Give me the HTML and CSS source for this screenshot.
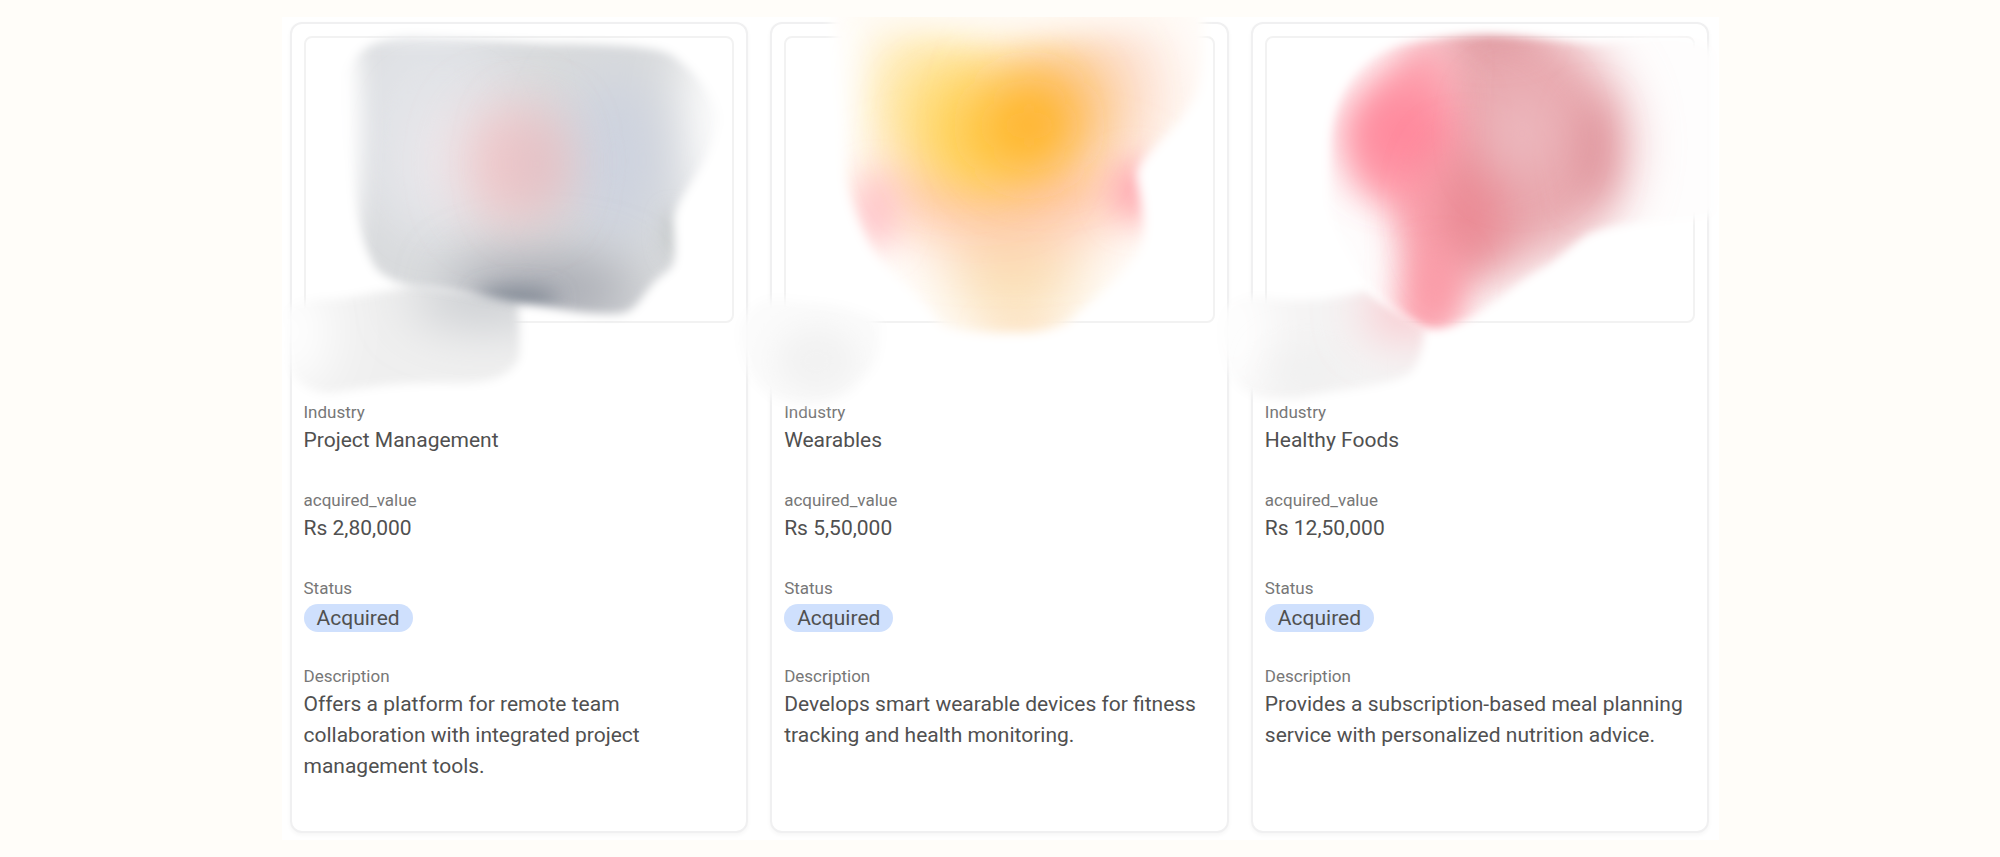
FILE: index.html
```html
<!DOCTYPE html>
<html lang="en">
<head>
<meta charset="utf-8">
<title>Acquired companies</title>
<link rel="stylesheet" href="styles.css">
</head>
<body>
<main class="panel">
  <article class="card">
    <div class="frame"></div>
    <dl class="fields">
      <div class="field"><dt>Industry</dt><dd>Project Management</dd></div>
      <div class="field"><dt>acquired_value</dt><dd>Rs 2,80,000</dd></div>
      <div class="field"><dt>Status</dt><dd class="status"><span class="chip">Acquired</span></dd></div>
      <div class="field"><dt>Description</dt><dd>Offers a platform for remote team collaboration with integrated project management tools.</dd></div>
    </dl>
    <svg class="art" viewBox="60 66 1371 1134" aria-hidden="true">
      <defs>
        <filter id="a-soft" x="-30%" y="-30%" width="160%" height="160%"><feGaussianBlur stdDeviation="15"/></filter>
        <filter id="a-wide" x="-200%" y="-200%" width="500%" height="500%"><feGaussianBlur stdDeviation="80"/></filter>
        <filter id="a-mid" x="-200%" y="-200%" width="500%" height="500%"><feGaussianBlur stdDeviation="32"/></filter>
        <mask id="a-body" maskUnits="userSpaceOnUse" x="0" y="0" width="1500" height="1250">
          <path filter="url(#a-soft)" fill="#fff" d="M220 220Q260 115 420 106C650 116 700 132 900 132C1050 136 1150 140 1200 164Q1310 240 1340 340C1340 480 1220 570 1208 650C1205 720 1225 780 1190 810C1110 860 1110 935 1040 938C930 945 830 912 750 910C640 895 560 865 430 860Q330 830 310 790C250 680 240 560 225 400Z"/>
        </mask>
        <mask id="a-foot" maskUnits="userSpaceOnUse" x="-50" y="700" width="1000" height="600">
          <path filter="url(#a-soft)" fill="#fff" d="M50 930Q80 890 200 895C300 880 380 860 450 855L740 900Q750 1000 745 1070Q710 1150 560 1145C400 1140 300 1155 180 1175Q80 1170 60 1090Z"/>
        </mask>
      </defs>
      <g mask="url(#a-foot)">
        <rect x="-50" y="700" width="1000" height="600" fill="#efefef"/>
        <ellipse cx="60" cy="990" rx="130" ry="190" fill="#fff" filter="url(#a-wide)"/>
        <ellipse cx="640" cy="890" rx="220" ry="80" fill="#c6c9cd" filter="url(#a-wide)"/>
      </g>
      <g mask="url(#a-body)">
        <rect width="1500" height="1250" fill="#d8dadc"/>
        <ellipse cx="480" cy="380" rx="260" ry="340" fill="#e1e3e7" filter="url(#a-wide)"/>
        <ellipse cx="215" cy="380" rx="60" ry="440" fill="#fff" filter="url(#a-mid)"/>
        <ellipse cx="400" cy="80" rx="260" ry="24" fill="#fff" filter="url(#a-mid)"/>
        <ellipse cx="1350" cy="370" rx="120" ry="320" fill="#fff" filter="url(#a-wide)"/>
        <ellipse cx="1030" cy="480" rx="150" ry="260" fill="#ced3df" filter="url(#a-wide)"/>
        <ellipse cx="520" cy="470" rx="100" ry="170" fill="#ece8ec" filter="url(#a-wide)"/>
        <ellipse cx="820" cy="870" rx="280" ry="110" fill="#a9abb3" filter="url(#a-wide)"/>
        <ellipse cx="710" cy="490" rx="130" ry="180" fill="#f2cacc" filter="url(#a-wide)"/>
        <ellipse cx="800" cy="490" rx="80" ry="150" fill="#e3bdc2" filter="url(#a-wide)"/>
        <ellipse cx="740" cy="895" rx="120" ry="32" fill="#7e8692" filter="url(#a-mid)"/>
        <ellipse cx="1205" cy="700" rx="20" ry="70" fill="#b9bebe" filter="url(#a-mid)"/>
      </g>
    </svg>
  </article>

  <article class="card">
    <div class="frame"></div>
    <dl class="fields">
      <div class="field"><dt>Industry</dt><dd>Wearables</dd></div>
      <div class="field"><dt>acquired_value</dt><dd>Rs 5,50,000</dd></div>
      <div class="field"><dt>Status</dt><dd class="status"><span class="chip">Acquired</span></dd></div>
      <div class="field"><dt>Description</dt><dd>Develops smart wearable devices for fitness tracking and health monitoring.</dd></div>
    </dl>
    <svg class="art" viewBox="90 66 1371 1134" aria-hidden="true">
      <defs>
        <filter id="b-soft" x="-30%" y="-30%" width="160%" height="160%"><feGaussianBlur stdDeviation="16"/></filter>
        <filter id="b-wide" x="-200%" y="-200%" width="500%" height="500%"><feGaussianBlur stdDeviation="90"/></filter>
        <filter id="b-mid" x="-200%" y="-200%" width="500%" height="500%"><feGaussianBlur stdDeviation="48"/></filter>
        <clipPath id="b-top"><rect x="-60" y="51" width="1600" height="1250"/></clipPath>
        <mask id="b-body" maskUnits="userSpaceOnUse" x="-50" y="0" width="1600" height="1250">
          <path filter="url(#b-soft)" fill="#fff" d="M260 -20L1370 -20Q1410 120 1370 280C1310 400 1200 450 1185 520C1195 600 1225 690 1195 750C1130 860 1040 900 985 965Q900 1000 820 994Q680 1002 600 975C540 880 440 820 390 740C340 640 310 560 310 480C300 300 290 240 285 140Z"/>
        </mask>
        <mask id="b-foot" maskUnits="userSpaceOnUse" x="-100" y="700" width="800" height="600">
          <path filter="url(#b-soft)" fill="#fff" d="M0 980Q40 870 170 900Q330 905 420 960Q430 1080 370 1130Q320 1200 220 1210Q130 1215 70 1170Q0 1100 0 980Z"/>
        </mask>
      </defs>
      <g mask="url(#b-foot)">
        <rect x="-100" y="700" width="800" height="600" fill="#fbfbfb"/>
        <ellipse cx="230" cy="1080" rx="130" ry="110" fill="#f2f2f2" filter="url(#b-mid)"/>
      </g>
      <g clip-path="url(#b-top)">
        <g mask="url(#b-body)">
          <rect x="-50" width="1600" height="1250" fill="#fffdfb"/>
          <ellipse cx="1110" cy="270" rx="180" ry="230" fill="#fde0d2" filter="url(#b-wide)"/>
          <ellipse cx="500" cy="280" rx="110" ry="220" fill="#feecc0" filter="url(#b-wide)"/>
          <ellipse cx="820" cy="780" rx="200" ry="230" fill="#fbe0b8" filter="url(#b-wide)"/>
          <ellipse cx="790" cy="580" rx="420" ry="130" fill="#ffc4ac" filter="url(#b-wide)"/>
          <ellipse cx="640" cy="310" rx="180" ry="190" fill="#ffe087" filter="url(#b-wide)"/>
          <ellipse cx="940" cy="310" rx="180" ry="180" fill="#fdc583" filter="url(#b-wide)"/>
          <ellipse cx="410" cy="630" rx="60" ry="110" fill="#ffc4ca" filter="url(#b-mid)"/>
          <ellipse cx="1180" cy="570" rx="70" ry="90" fill="#ffa8b0" filter="url(#b-mid)"/>
          <ellipse cx="720" cy="420" rx="180" ry="160" fill="#ffd055" filter="url(#b-wide)"/>
          <ellipse cx="865" cy="375" rx="135" ry="145" fill="#ffb020" filter="url(#b-wide)"/>
          <ellipse cx="280" cy="250" rx="40" ry="240" fill="#fff" filter="url(#b-mid)"/>
          <ellipse cx="830" cy="20" rx="560" ry="60" fill="#fffaf4" filter="url(#b-mid)"/>
          <ellipse cx="850" cy="1000" rx="110" ry="20" fill="#fcd4a8" filter="url(#b-mid)"/>
        </g>
      </g>
    </svg>
  </article>

  <article class="card">
    <div class="frame"></div>
    <dl class="fields">
      <div class="field"><dt>Industry</dt><dd>Healthy Foods</dd></div>
      <div class="field"><dt>acquired_value</dt><dd>Rs 12,50,000</dd></div>
      <div class="field"><dt>Status</dt><dd class="status"><span class="chip">Acquired</span></dd></div>
      <div class="field"><dt>Description</dt><dd>Provides a subscription-based meal planning service with personalized nutrition advice.</dd></div>
    </dl>
    <svg class="art" viewBox="90 66 1371 1134" aria-hidden="true">
      <defs>
        <filter id="c-soft" x="-30%" y="-30%" width="160%" height="160%"><feGaussianBlur stdDeviation="14"/></filter>
        <filter id="c-wide" x="-200%" y="-200%" width="500%" height="500%"><feGaussianBlur stdDeviation="75"/></filter>
        <filter id="c-mid" x="-200%" y="-200%" width="500%" height="500%"><feGaussianBlur stdDeviation="54"/></filter>
        <mask id="c-body" maskUnits="userSpaceOnUse" x="-50" y="0" width="1650" height="1250">
          <path filter="url(#c-soft)" fill="#fff" d="M325 420C335 270 420 160 540 130Q680 104 800 104C920 106 1020 126 1130 130C1300 104 1440 100 1475 160L1475 640C1400 670 1230 650 1100 700C1040 740 1020 770 960 805C860 860 800 940 720 965Q640 1000 590 970C520 930 450 880 420 830C370 740 310 650 320 560Z"/>
        </mask>
        <mask id="c-foot" maskUnits="userSpaceOnUse" x="-100" y="700" width="900" height="600">
          <path filter="url(#c-soft)" fill="#fff" d="M0 980Q10 870 140 890C250 910 350 890 430 870L610 985Q600 1090 560 1120C480 1160 370 1160 230 1190Q100 1200 50 1150Q0 1080 0 980Z"/>
        </mask>
      </defs>
      <g mask="url(#c-foot)">
        <rect x="-100" y="700" width="900" height="600" fill="#f4f3f3"/>
        <ellipse cx="40" cy="990" rx="110" ry="220" fill="#fff" filter="url(#c-wide)"/>
        <ellipse cx="260" cy="1110" rx="120" ry="70" fill="#f0f0f0" filter="url(#c-mid)"/>
        <ellipse cx="550" cy="930" rx="120" ry="80" fill="#fbc2c9" filter="url(#c-wide)"/>
      </g>
      <g mask="url(#c-body)">
        <rect x="-50" width="1650" height="1250" fill="#fefdfd"/>
        <path filter="url(#c-wide)" fill="#e8a8ae" d="M640 20L920 20Q1220 200 1220 430Q1220 600 1080 720L820 820L600 860Z"/>
        <ellipse cx="1110" cy="450" rx="50" ry="150" fill="#df949c" filter="url(#c-mid)"/>
        <ellipse cx="820" cy="100" rx="120" ry="36" fill="#db9199" filter="url(#c-mid)"/>
        <path filter="url(#c-mid)" fill="#fda5b1" d="M370 390Q450 220 600 110L690 150L680 500L740 700L700 880L660 1040L520 1010L550 760L500 620L400 560Z"/>
        <ellipse cx="550" cy="400" rx="160" ry="140" fill="#ff889c" filter="url(#c-wide)"/>
        <ellipse cx="740" cy="630" rx="100" ry="190" fill="#ea8792" filter="url(#c-wide)"/>
        <ellipse cx="650" cy="880" rx="60" ry="120" fill="#fa98a4" filter="url(#c-mid)"/>
        <ellipse cx="900" cy="400" rx="100" ry="130" fill="#edb9bf" filter="url(#c-wide)"/>
      </g>
    </svg>
  </article>
</main>
</body>
</html>
```
FILE: styles.css
```css
* {
  box-sizing: border-box;
}

body {
  margin: 0;
  padding: 17px 0;
  background: #fffdf9;
  color: #505050;
  font-family: Roboto, "Liberation Sans", sans-serif;
  font-size: 21px;
  line-height: 31px;
}

.panel {
  display: grid;
  grid-template-columns: repeat(3, minmax(0, 1fr));
  gap: 22px;
  max-width: 1437px;
  margin: 0 auto;
  padding: 5px 9px 7px 8px;
  background: #fff;
}

.card {
  position: relative;
  padding: 12px 12px 18px;
  border: 2px solid #f0f0f1;
  border-radius: 12px;
  background: #fff;
  box-shadow: 0 2px 4px rgba(0, 0, 0, 0.04);
}

.frame {
  aspect-ratio: 3 / 2;
  border: 2px solid #f2f2f2;
  border-radius: 8px;
}

.fields {
  margin: 76px 0 0;
}

.field {
  margin-bottom: 31px;
}

dt {
  color: #777;
  font-size: 17px;
  line-height: 26px;
}

dd {
  margin: 0;
}

.status {
  display: flex;
  padding-top: 3px;
}

.chip {
  padding: 0 13px;
  border-radius: 14px;
  background: #cfe0fd;
  line-height: 28px;
}

.art {
  position: absolute;
  top: -2px;
  left: -2px;
  width: calc(100% + 4px);
  overflow: visible;
  pointer-events: none;
}
```
